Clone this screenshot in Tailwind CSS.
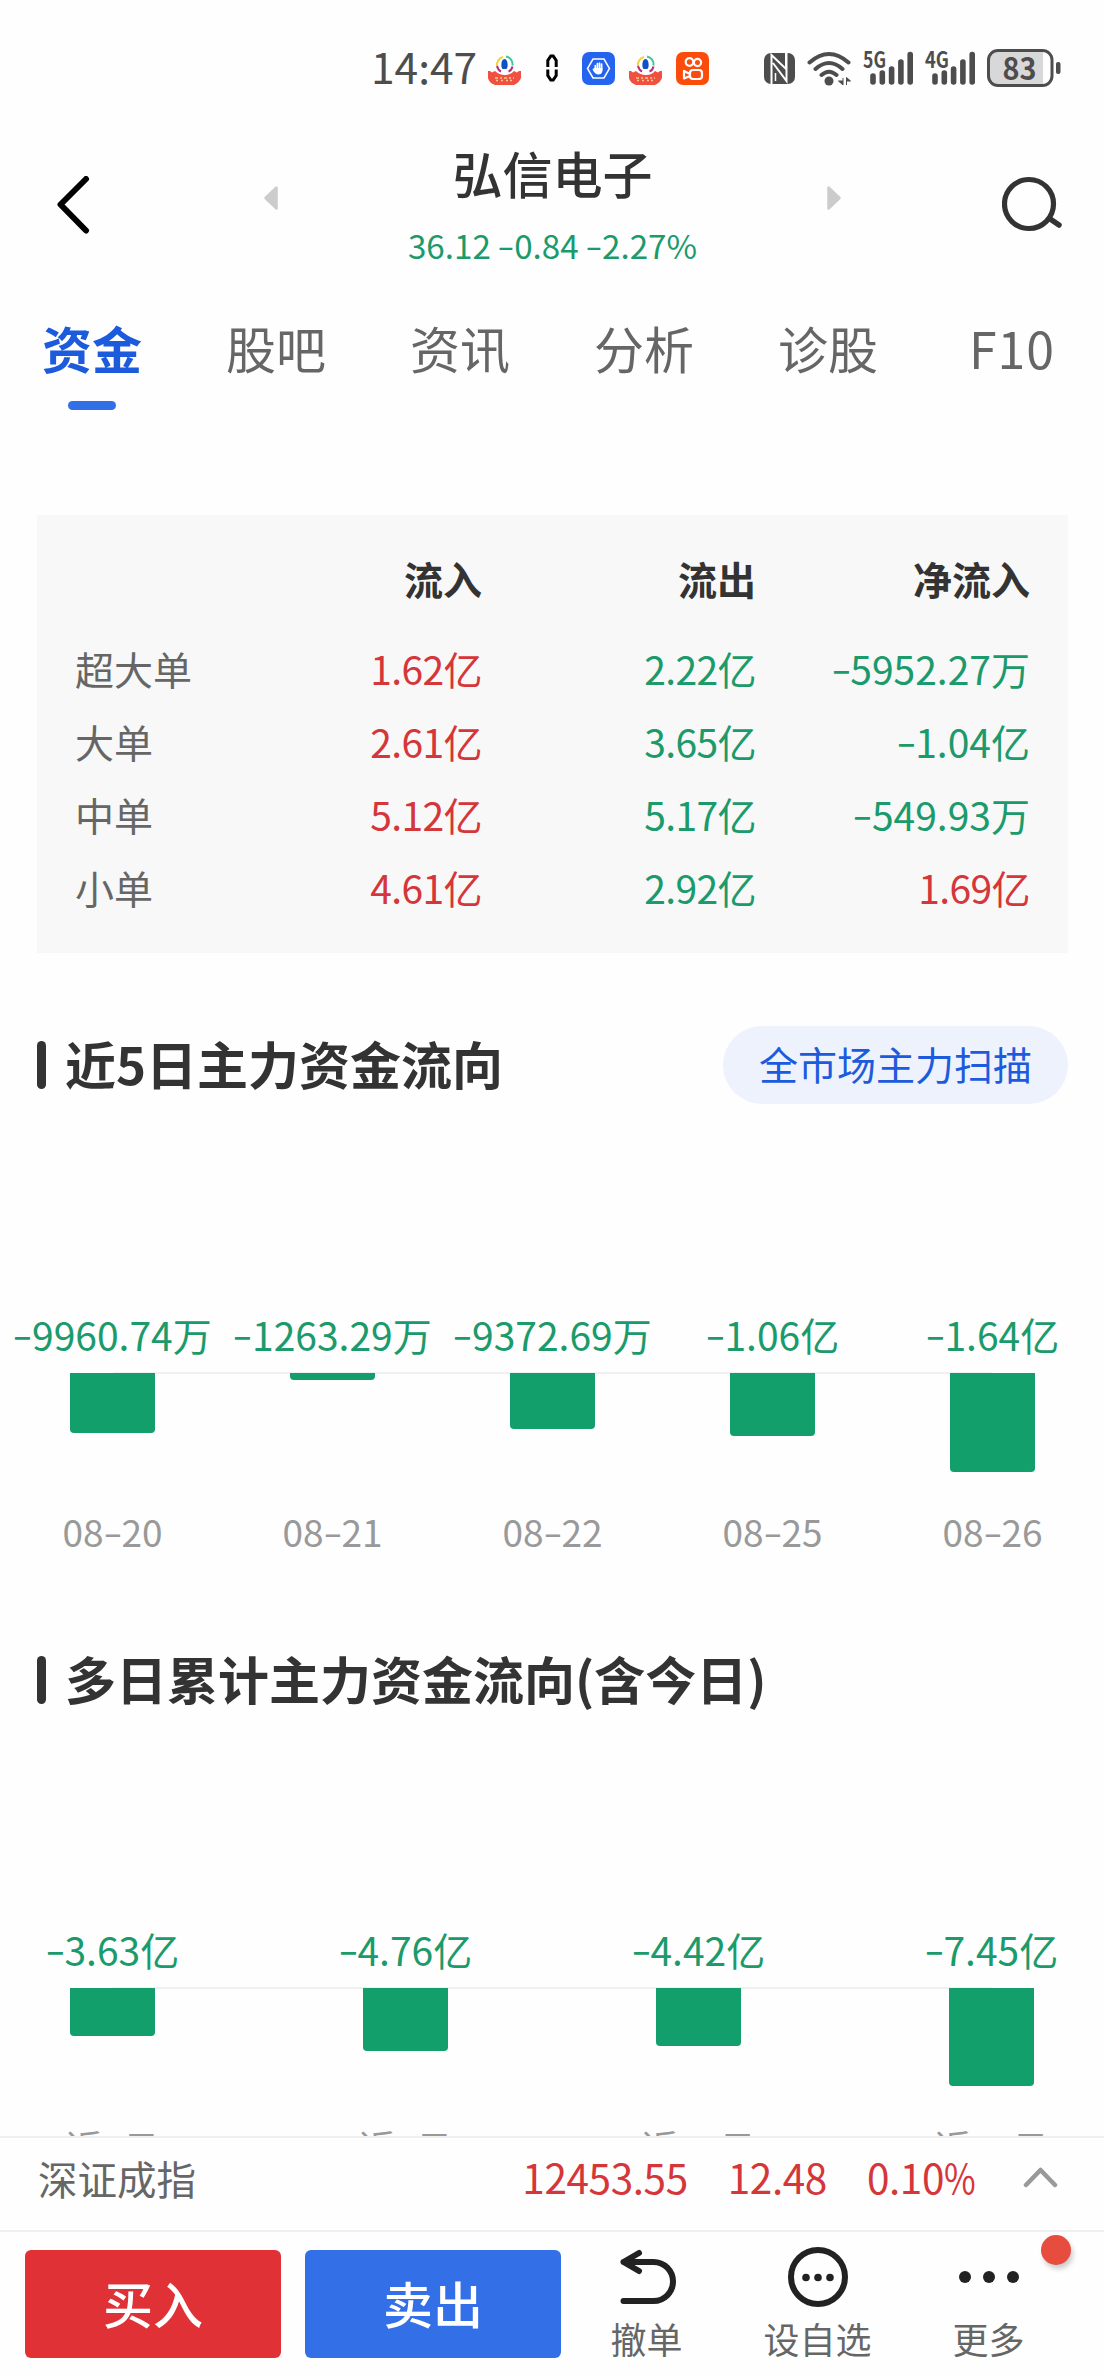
<!DOCTYPE html>
<html lang="zh-CN">
<head>
    <meta charset="UTF-8">
    <meta name="viewport" content="width=1104">
    <title>弘信电子 - 资金</title>
    <script src="https://cdn.jsdelivr.net/npm/@tailwindcss/browser@4"></script>
</head>
<body class="bg-[#fefefe]">
<div class="w-[1104px] h-[2376px] flex flex-col overflow-hidden bg-[#fefefe] text-[#333] whitespace-nowrap font-['Noto_Sans_CJK_SC',sans-serif]">

    <main class="h-[2136px] flex-none overflow-hidden">
        <!-- Status bar -->
        <div class="h-[136px] flex items-center pl-[371px] text-[#4d4d4d]">
            <span class="w-[117px] text-[42.5px] leading-[60px] -mt-[4px]">14:47</span>
            <svg class="w-[33px] h-[33px]" viewBox="0 0 33 33">
                <g id="app-badge">
                    <path d="M9 14a8 8 0 0 1 6-9" fill="none" stroke="#f5d23c" stroke-width="2"/>
                    <path d="M18 4.500a8 8 0 0 1 6.500 9" fill="none" stroke="#43c59e" stroke-width="2"/>
                    <path d="M9 14q1 4 4 5.500M24.500 14.500q-1 4-4 5" fill="none" stroke="#b0307f" stroke-width="2"/>
                    <path d="M13.500 15c-.5-4 .5-8 3-8s3.500 4 3 8l-1 2h-4z" fill="#0f52c4"/>
                    <path d="M0 19h2l2 1.500 3-1.500q4 4 10 4t9-4l3 1.500 2-1.500h2v7q-2 5-7 7H7q-6-2-7-7z" fill="#f0503f"/>
                    <path d="M7 26h3m2 0h2m2 0h3m2 0h2m2 0h1M8 28.500h2m3 0h2m3 0h2m2 0h2" stroke="#ffc58a" stroke-width="1.500"/>
                </g>
            </svg>
            <svg class="ml-[25px] w-[12px] h-[28px]" viewBox="0 0 12 28">
                <path d="M1.800 13V6.500l3-4.500h2.400l3 4.500V13M1.800 15.500v6l3 4.500h2.400l3-4.500v-6" fill="none" stroke="#000" stroke-width="3"/>
            </svg>
            <svg class="ml-[24px] w-[33px] h-[33px]" viewBox="0 0 33 33">
                <rect width="33" height="33" rx="7" fill="#2464ef"/>
                <path d="M11 7h11l5.500 9.500L22 26H11L5.500 16.500z" fill="none" stroke="#fff" stroke-width="1.500"/>
                <path d="M13.300 18v-4.500M15.400 17v-5.500M17.500 17v-6M19.600 17v-5" stroke="#fff" stroke-width="1.700" stroke-linecap="round"/>
                <path d="M12.500 16h8v3q-1 3.500-4 3.500-3.500 0-6-5l1-1z" fill="#fff"/>
            </svg>
            <svg class="ml-[14px] w-[33px] h-[33px]" viewBox="0 0 33 33"><use href="#app-badge"/></svg>
            <svg class="ml-[14px] w-[33px] h-[33px]" viewBox="0 0 33 33">
                <rect width="33" height="33" rx="7" fill="#fc4c0c"/>
                <g fill="none" stroke="#fff" stroke-width="2.200">
                    <circle cx="13.500" cy="10" r="3.800"/><circle cx="21.500" cy="10.500" r="3.600"/>
                    <rect x="14" y="18" width="12" height="9" rx="3"/>
                    <path d="M14 22l-6-3v7.500l6-2.500" stroke-linejoin="round"/>
                </g>
            </svg>

            <!-- NFC -->
            <svg class="ml-[55px] w-[31px] h-[31px]" viewBox="0 0 31 31">
                <rect width="31" height="31" rx="7" fill="#4d4d4d"/>
                <path d="M7.500 31V2l14.500 14V0M22.500 0v28L9 10" fill="none" stroke="#fff" stroke-width="2"/>
                <path d="M11.500 20v8" stroke="#fff" stroke-width="1.500"/>
            </svg>
            <!-- Wi-Fi -->
            <svg class="ml-[12px] w-[45px] h-[35px]" viewBox="0 0 45 35">
                <g fill="none" stroke="#4d4d4d" stroke-width="4" stroke-linecap="round">
                    <path d="M2.500 11.500q19.500-17 39 0M8.500 18q13.500-12 27 0M14.500 24q7.500-6.500 15 0"/>
                </g>
                <circle cx="22" cy="30" r="4.500" fill="#4d4d4d"/>
                <path d="M36 27v7l-4.500-4h4.500M39.500 34v-7.500l4 3.500h-4" fill="#4d4d4d" stroke="#4d4d4d"/>
            </svg>
            <!-- Mobile signals -->
            <svg class="ml-[11px] w-[50px] h-[36px] overflow-visible" viewBox="0 0 50 36">
                <text x="0" y="18" font-size="22" font-weight="700" textLength="23" lengthAdjust="spacingAndGlyphs" fill="#4d4d4d">5G</text>
                <path id="bars" d="M10 26v6M19.300 23v9M28.600 19v13M37.900 12v20M47.200 4.500v27.500" stroke="#4d4d4d" stroke-width="5.600" stroke-linecap="round"/>
            </svg>
            <svg class="ml-[12px] w-[50px] h-[36px] overflow-visible" viewBox="0 0 50 36">
                <text x="0" y="18" font-size="22" font-weight="700" textLength="24" lengthAdjust="spacingAndGlyphs" fill="#4d4d4d">4G</text>
                <use href="#bars"/>
            </svg>
            <!-- Battery -->
            <svg class="ml-[12px] w-[74px] h-[38px] overflow-visible" viewBox="0 0 74 38">
                <rect x="2" y="2" width="54" height="34" rx="9" fill="#d8d8d8"/>
                <rect x="50" y="3" width="6" height="32" fill="#d8d8d8"/>
                <rect x="1.500" y="1.500" width="63.500" height="35" rx="9.500" fill="none" stroke="#4d4d4d" stroke-width="3"/>
                <rect x="69" y="13" width="4.500" height="12" rx="2" fill="#4d4d4d"/>
                <text x="15.500" y="30.500" font-size="30.500" font-weight="700" textLength="34" lengthAdjust="spacingAndGlyphs" fill="#4d4d4d">83</text>
            </svg>
        </div>

        <!-- Stock header -->
        <header class="h-[156px] flex items-start pl-[57px] pr-[42px]">
            <svg class="mt-[40px] w-[33px] h-[58px]" viewBox="0 0 33 58">
                <path d="M29 3L3.500 28.500 29 54.500" fill="none" stroke="#000" stroke-width="6" stroke-linecap="round" stroke-linejoin="round"/>
            </svg>
            <svg class="ml-[174px] mt-[50px] w-[14px] h-[24px]" viewBox="0 0 14 24">
                <path d="M12.500 1.500v21L1.500 12z" fill="#ccc" stroke="#ccc" stroke-width="2.500" stroke-linejoin="round"/>
            </svg>
            <div class="flex-1 flex flex-col items-center pt-[6px]">
                <h1 class="text-[50px] leading-[60px] font-medium">弘信电子</h1>
                <p class="mt-[23px] text-[33.2px] leading-[40px] text-[#1b9a6b]" data-num>36.12 -0.84 -2.27%</p>
            </div>
            <svg class="mt-[50px] w-[14px] h-[24px]" viewBox="0 0 14 24">
                <path d="M1.500 1.500v21L12.500 12z" fill="#ccc" stroke="#ccc" stroke-width="2.500" stroke-linejoin="round"/>
            </svg>
            <svg class="ml-[161px] mt-[40px] w-[60px] h-[56px]" viewBox="0 0 60 56">
                <circle cx="27" cy="28" r="24.500" fill="none" stroke="#333" stroke-width="5.200"/>
                <path d="M47.500 42.500l9.500 6.500" stroke="#333" stroke-width="5.500" stroke-linecap="round"/>
            </svg>
        </header>

        <!-- Tabs -->
        <nav class="h-[128px] grid grid-cols-6 pt-[25px] text-center text-[50px] leading-[60px] text-[#666]">
            <div class="flex flex-col items-center font-bold text-[#1c5bdc]">
                资金
                <span class="mt-[24px] w-[48px] h-[9px] rounded-full bg-[#336fe6]"></span>
            </div>
            <div>股吧</div>
            <div>资讯</div>
            <div>分析</div>
            <div>诊股</div>
            <div class="tracking-[1px]">F10</div>
        </nav>

        <!-- Inflow / outflow table -->
        <section class="mt-[95px] ml-[37px] w-[1031px] h-[438px] bg-[#f8f8f8] pl-[38px] pt-[9px] text-[39px]">
            <div class="h-[108px] grid grid-cols-[133px_274px_274px_274px] items-center text-right font-bold">
                <span></span><span>流入</span><span>流出</span><span>净流入</span>
            </div>
            <div id="orders"></div>
        </section>

        <!-- Last 5 days -->
        <section class="mt-[73px]">
            <div class="h-[78px] flex items-center pl-[37px] pr-[36px]">
                <span class="w-[9px] h-[48px] rounded-full bg-[#333]"></span>
                <h2 class="ml-[19px] mb-[5px] flex-1 text-[51px] leading-[60px] font-bold">近5日主力资金流向</h2>
                <a class="w-[345px] h-[78px] pb-[4px] rounded-full bg-[#edf2fc] text-[39px] leading-[74px] text-center text-[#1c5bdc]">全市场主力扫描</a>
            </div>
            <div id="daily" class="mt-[208px] pl-px"></div>
        </section>

        <!-- Cumulative -->
        <section class="mt-[90px]">
            <div class="h-[78px] flex items-center pl-[37px]">
                <span class="w-[9px] h-[48px] rounded-full bg-[#333]"></span>
                <h2 class="ml-[19px] mb-[5px] text-[51px] leading-[60px] font-bold">多日累计主力资金流向(含今日)</h2>
            </div>
            <div id="total" class="mt-[208px]"></div>
        </section>
    </main>

    <!-- Index bar -->
    <div class="h-[94px] flex-none flex items-center border-t-2 border-[#f0f0f0] pl-[38px] pr-[46px] pb-[13px]">
        <span class="flex-1 text-[39.5px] text-[#666]">深证成指</span>
        <div class="flex gap-[40px] text-[40.5px] tracking-[-0.4px] text-[#d5363a]">
            <span>12453.55</span>
            <span>12.48</span>
            <span>0.10<span class="inline-block w-[31px] origin-left scale-x-85">%</span></span>
        </div>
        <svg class="ml-[48px] w-[35px] h-[21px]" viewBox="0 0 35 21">
            <path d="M3 18L17.500 3 32 18" fill="none" stroke="#999" stroke-width="4.500" stroke-linecap="round" stroke-linejoin="round"/>
        </svg>
    </div>

    <!-- Actions -->
    <footer class="h-[146px] flex-none flex items-start border-t-2 border-[#f0f0f0] pl-[25px]">
        <button class="mt-[18px] w-[256px] h-[108px] pb-[4px] rounded-[6px] bg-[#df3136] text-white text-[50px] font-medium">买入</button>
        <button class="mt-[18px] ml-[24px] w-[256px] h-[108px] pb-[4px] rounded-[6px] bg-[#336fe6] text-white text-[50px] font-medium">卖出</button>
        <div class="w-[171px] pt-[14px] flex flex-col items-center text-[36px] leading-[44px] text-[#666]">
            <svg class="w-[60px] h-[62px]" viewBox="0 0 60 62">
                <path d="M6.500 16H36.500a19.500 19.500 0 0 1 0 39H6.500M22 7L6.500 16 22 25" fill="none" stroke="#222" stroke-width="6" stroke-linecap="round" stroke-linejoin="round"/>
            </svg>
            <span class="mt-[8px]">撤单</span>
        </div>
        <div class="w-[171px] pt-[14px] flex flex-col items-center text-[36px] leading-[44px] text-[#666]">
            <svg class="w-[62px] h-[62px]" viewBox="0 0 62 62">
                <circle cx="31" cy="31" r="27" fill="none" stroke="#222" stroke-width="6"/>
                <g fill="#222"><circle cx="19" cy="31.500" r="3.800"/><circle cx="31" cy="31.500" r="3.800"/><circle cx="43" cy="31.500" r="3.800"/></g>
            </svg>
            <span class="mt-[8px]">设自选</span>
        </div>
        <div class="relative w-[171px] pt-[14px] flex flex-col items-center text-[36px] leading-[44px] text-[#666]">
            <svg class="w-[62px] h-[62px]" viewBox="0 0 62 62">
                <g fill="#222"><circle cx="7" cy="31" r="6"/><circle cx="31" cy="31" r="6"/><circle cx="55" cy="31" r="6"/></g>
            </svg>
            <span class="mt-[8px]">更多</span>
            <i class="absolute left-[138px] top-[3px] size-[30px] rounded-full bg-[#e64d3f] shadow-[2px_4px_5px_rgba(0,0,0,0.2)]"></i>
        </div>
    </footer>
</div>

<script>
    // wide minus sign, as in the tabular figures
    function num(text) {
        return text.replace(/-/g, '<span class="inline-block w-[0.48em] text-center scale-x-150 -translate-y-[0.04em]">-</span>');
    }
    function tone(text) {
        return text.startsWith('-') ? 'text-[#1b9a6b]' : 'text-[#d5363a] tracking-[-0.6px]';
    }

    var orders = [
        ['超大单', '1.62亿', '2.22亿', '-5952.27万'],
        ['大单', '2.61亿', '3.65亿', '-1.04亿'],
        ['中单', '5.12亿', '5.17亿', '-549.93万'],
        ['小单', '4.61亿', '2.92亿', '1.69亿']
    ];
    document.getElementById('orders').innerHTML = orders.map(o => `
        <div class="h-[73px] grid grid-cols-[133px_274px_274px_274px] items-center text-right">
            <span class="text-left text-[#666]">${o[0]}</span>
            <span class="text-[#d5363a] tracking-[-0.6px]">${o[1]}</span>
            <span class="text-[#1b9a6b] tracking-[-0.6px]">${o[2]}</span>
            <span class="${tone(o[3])}">${num(o[3])}</span>
        </div>`).join('');

    // each item: value, bar height in px, label
    function chart(id, col, labels, items) {
        document.getElementById(id).innerHTML = `
            <div class="flex justify-center text-[39px] leading-[44px] text-[#1b9a6b]">
                ${items.map(i => `<div class="${col} flex-none text-center">${num(i[0])}</div>`).join('')}
            </div>
            <div class="mt-[16px] mx-[112px] h-[2px] bg-[#f0f0f0]"></div>
            <div class="-mt-px h-[138px] relative flex items-start justify-center">
                ${items.map(i => `<div class="${col} flex-none flex justify-center"><div class="w-[85px] rounded-b-[4px] bg-[#139f6b]" style="height:${i[1]}px"></div></div>`).join('')}
            </div>
            <div class="flex justify-center text-[37px] text-[#999] ${labels}">
                ${items.map(i => `<div class="${col} flex-none text-center">${num(i[2])}</div>`).join('')}
            </div>`;
    }
    chart('daily', 'w-[220px]', 'leading-[40px]', [
        ['-9960.74万', 60, '08-20'],
        ['-1263.29万', 7, '08-21'],
        ['-9372.69万', 56, '08-22'],
        ['-1.06亿', 63, '08-25'],
        ['-1.64亿', 99, '08-26']
    ]);
    chart('total', 'w-[293px]', 'leading-[43px]', [
        ['-3.63亿', 48, '近3日'],
        ['-4.76亿', 63, '近5日'],
        ['-4.42亿', 58, '近10日'],
        ['-7.45亿', 98, '近20日']
    ]);
    document.querySelectorAll('[data-num]').forEach(el => { el.innerHTML = num(el.textContent); });
</script>
</body>
</html>
